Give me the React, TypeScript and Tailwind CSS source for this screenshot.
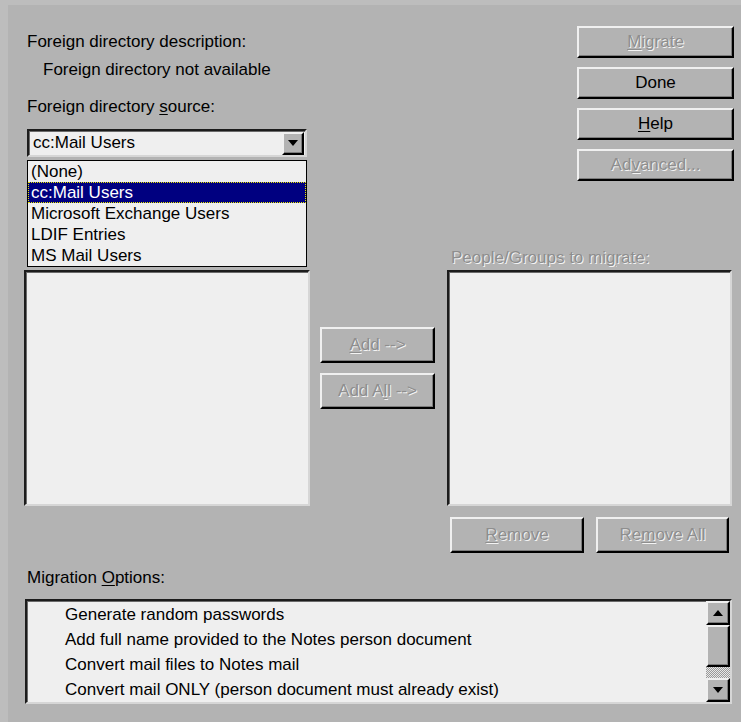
import React from "react";
import clsx from "clsx";

const directories = [
  "(None)",
  "cc:Mail Users",
  "Microsoft Exchange Users",
  "LDIF Entries",
  "MS Mail Users",
];

const options = [
  "Generate random passwords",
  "Add full name provided to the Notes person document",
  "Convert mail files to Notes mail",
  "Convert mail ONLY (person document must already exist)",
];

const disabledText = "text-[#8e8e8e] [text-shadow:1px_1px_0_#f4f4f4]";

// raised 3D push button
const Button = ({
  children,
  disabled,
  className,
}: {
  children: React.ReactNode;
  disabled?: boolean;
  className?: string;
}) => (
  <div
    className={clsx(
      "flex items-center justify-center border-2 border-t-[#f0f0f0] border-l-[#f0f0f0] border-b-black border-r-black bg-[#b3b3b3] shadow-[inset_-1px_-1px_0_#7c7c7c]",
      disabled ? disabledText : "text-black",
      className
    )}
  >
    {children}
  </div>
);

// sunken white field
const Well = ({
  children,
  className,
}: {
  children?: React.ReactNode;
  className?: string;
}) => (
  <div
    className={clsx(
      "border-2 border-t-[#1c1c1c] border-l-[#1c1c1c] border-b-[#d6d6d6] border-r-[#d6d6d6] bg-[#efefef] shadow-[inset_1px_1px_0_#6a6a6a]",
      className
    )}
  >
    {children}
  </div>
);

const Arrow = ({ up }: { up?: boolean }) => (
  <svg width="10" height="6" viewBox="0 0 10 6">
    <polygon points={up ? "0,6 10,6 5,0" : "0,0 10,0 5,6"} fill="#000" />
  </svg>
);

const ArrowButton = ({ up, className }: { up?: boolean; className?: string }) => (
  <div
    className={clsx(
      "flex items-center justify-center border-2 border-t-[#f0f0f0] border-l-[#f0f0f0] border-b-black border-r-black bg-[#b3b3b3] shadow-[inset_-1px_-1px_0_#7c7c7c]",
      className
    )}
  >
    <Arrow up={up} />
  </div>
);

export default function App() {
  return (
    <div className="w-[741px] h-[722px] overflow-hidden bg-[#b3b3b3] border-l-[8px] border-t-[5px] border-l-[#bdbdbd] border-t-[#bdbdbd] font-['Liberation_Sans',Arial,sans-serif] text-[17px] leading-[20px] text-black">
      {/* header: source picker + dialog buttons */}
      <div className="flex h-[243px]">
        <div className="ml-[19px] w-[280px] pt-[27px]">
          <div>Foreign directory description:</div>
          <div className="mt-[8px] pl-[16px]">Foreign directory not available</div>
          <div className="mt-[17px]">
            Foreign directory <u className="underline-offset-2">s</u>ource:
          </div>

          <div className="relative mt-[12px]">
            <Well className="flex h-[28px] items-center justify-between pl-[4px] pr-[1px]">
              <span>cc:Mail Users</span>
              <ArrowButton className="h-[23px] w-[22px]" />
            </Well>

            <div className="absolute left-0 top-[31px] z-10 w-[280px] border border-black bg-[#efefef]">
              {directories.map((d) => (
                <div
                  key={d}
                  className={clsx(
                    "h-[21px] pl-[3px] leading-[21px]",
                    d === "cc:Mail Users" &&
                      "bg-[#000080] text-white outline-1 outline-dotted outline-[#e8e800] -outline-offset-1"
                  )}
                >
                  {d}
                </div>
              ))}
            </div>
          </div>
        </div>

        <div className="ml-auto mr-[7px] flex w-[157px] flex-col gap-[9px] pt-[21px]">
          <Button disabled className="h-[32px]">
            <span>
              <u className="underline-offset-2">M</u>igrate
            </span>
          </Button>
          <Button className="h-[32px]">Done</Button>
          <Button className="h-[32px]">
            <span>
              <u className="underline-offset-2">H</u>elp
            </span>
          </Button>
          <Button disabled className="h-[32px]">
            <span>
              Ad<u className="underline-offset-2">v</u>anced...
            </span>
          </Button>
        </div>
      </div>

      {/* people lists */}
      <div className="flex items-start">
        <Well className="ml-[16px] mt-[22px] h-[236px] w-[286px]" />

        <div className="ml-[10px] flex w-[115px] flex-col gap-[10px] pt-[79px]">
          <Button disabled className="h-[36px]">
            <span>
              <u className="underline-offset-2">A</u>dd --&gt;
            </span>
          </Button>
          <Button disabled className="h-[36px]">
            <span>
              Add A<u className="underline-offset-2">l</u>l --&gt;
            </span>
          </Button>
        </div>

        <div className="ml-[12px] w-[285px]">
          <div className={clsx("pl-[4px]", disabledText)}>
            People/Groups to mi<u className="underline-offset-2">g</u>rate:
          </div>
          <Well className="mt-[2px] h-[236px]" />
          <div className="mt-[11px] flex gap-[12px] pl-[3px]">
            <Button disabled className="h-[36px] w-[134px]">
              <span>
                <u className="underline-offset-2">R</u>emove
              </span>
            </Button>
            <Button disabled className="h-[36px] w-[133px]">
              <span>
                Re<u className="underline-offset-2">m</u>ove All
              </span>
            </Button>
          </div>
        </div>
      </div>

      {/* migration options */}
      <div className="ml-[19px] mt-[15px]">
        Migration <u className="underline-offset-2">O</u>ptions:
      </div>
      <Well className="ml-[17px] mt-[11px] flex h-[105px] w-[707px]">
        <div className="flex-1 pt-[1px] pl-[38px]">
          {options.map((o) => (
            <div key={o} className="h-[25px] leading-[25px]">
              {o}
            </div>
          ))}
        </div>
        <div className="flex w-[24px] flex-col">
          <ArrowButton up className="h-[24px]" />
          <div className="h-[42px] border-2 border-t-[#f0f0f0] border-l-[#f0f0f0] border-b-black border-r-black bg-[#b3b3b3] shadow-[inset_-1px_-1px_0_#7c7c7c]" />
          <div className="flex-1 bg-[image:repeating-conic-gradient(#e8e8e8_0%_25%,#9a9a9a_0%_50%)] bg-size-[2px_2px]" />
          <ArrowButton className="h-[24px]" />
        </div>
      </Well>
    </div>
  );
}
